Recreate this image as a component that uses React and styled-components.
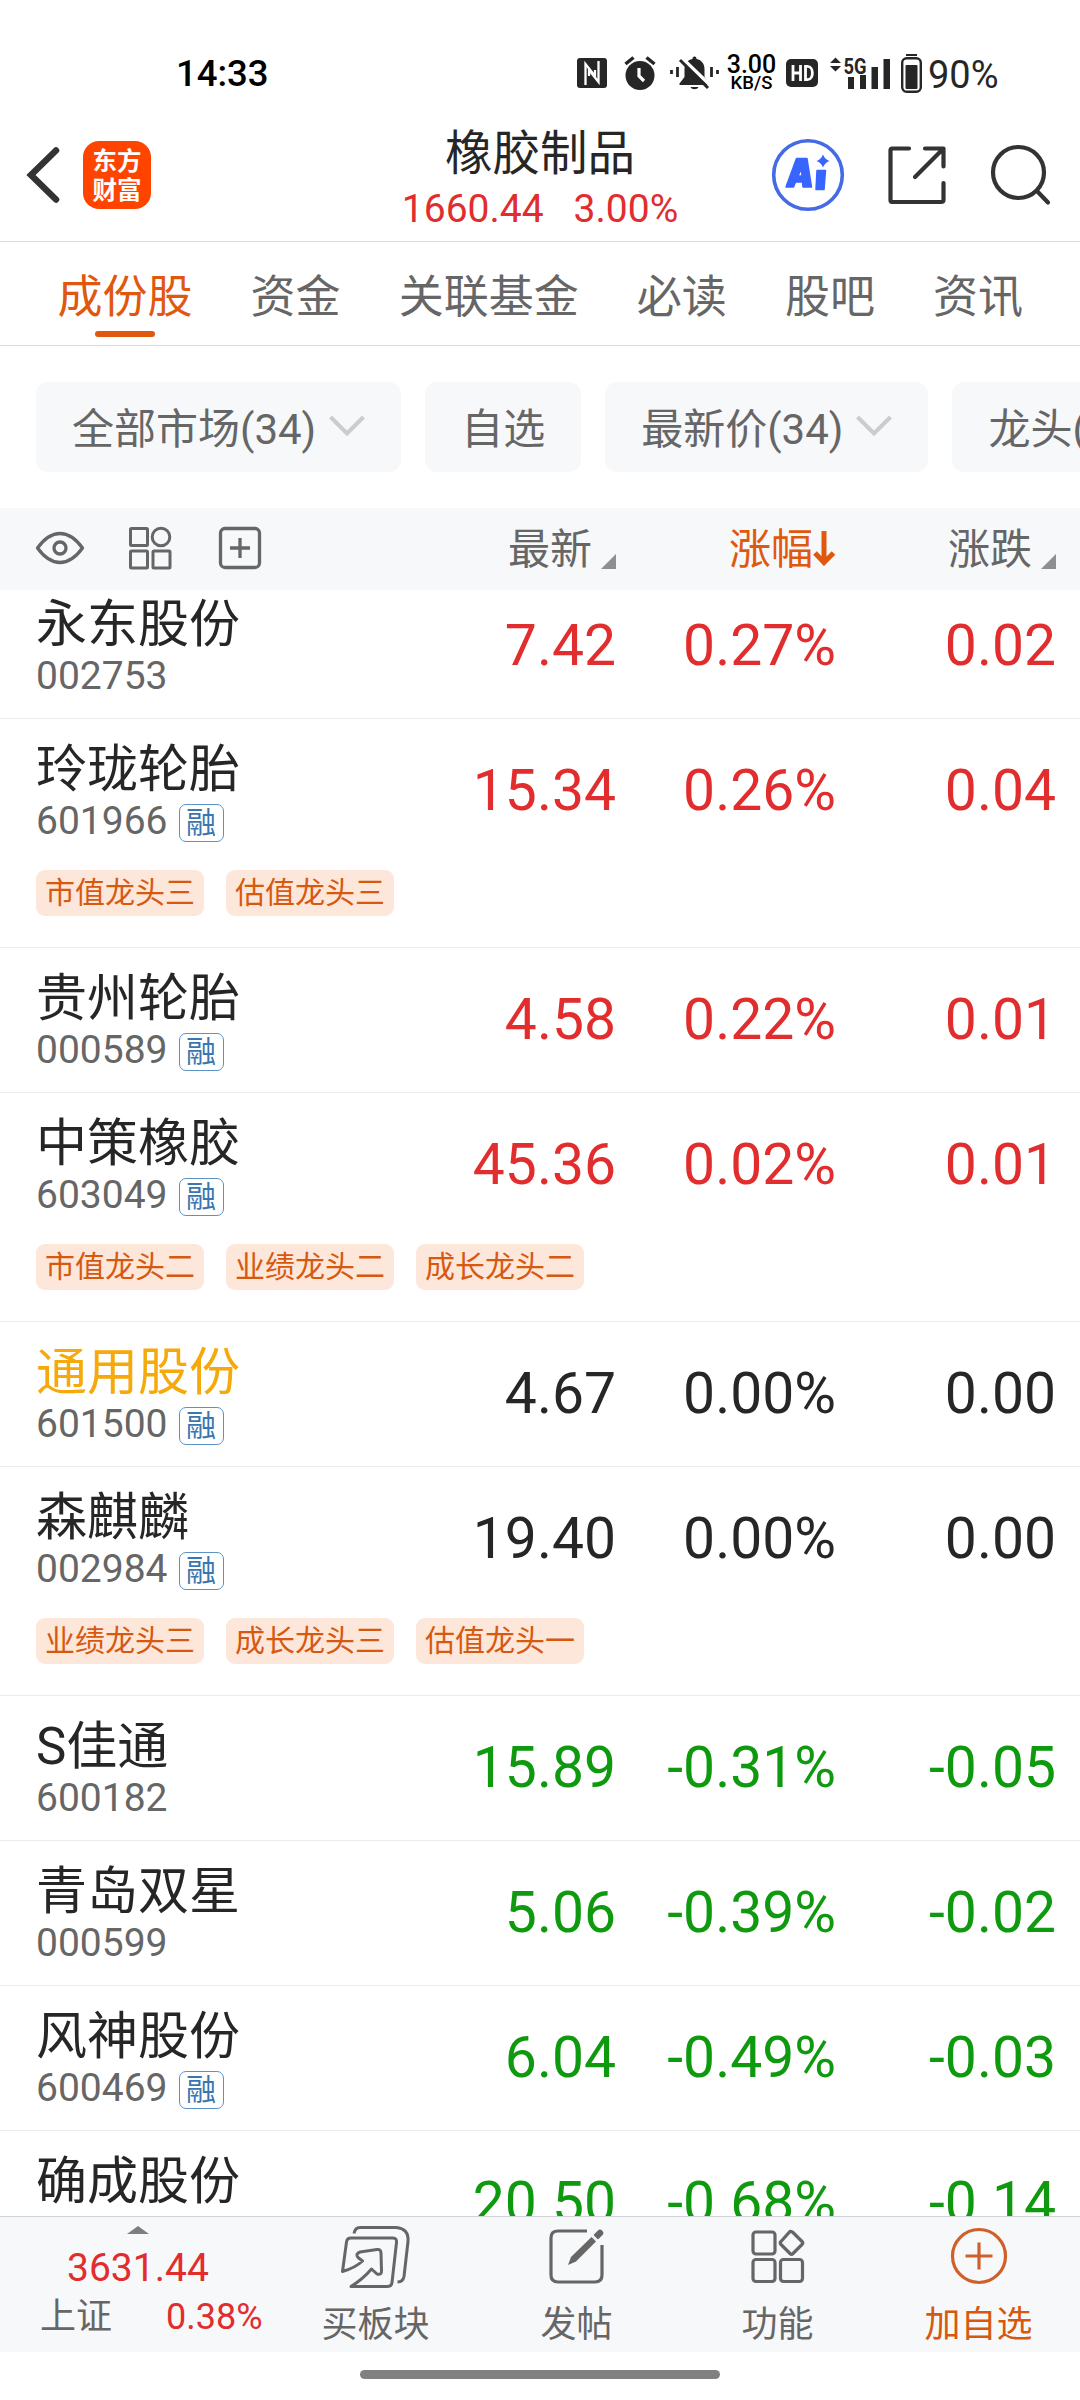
import React from "react";
import styled, { createGlobalStyle } from "styled-components";

const GlobalStyle = createGlobalStyle`
    * {
        box-sizing: border-box;
    }

    body {
        margin: 0;
        background: #fff;
        font-family: Roboto, "Noto Sans CJK SC", sans-serif;
        color: #262626;
    }
`;

const colors = {
    up: "#e12d2d",
    down: "#0f990f",
    flat: "#262626",
    accent: "#e0580e",
    grey: "#666",
    panel: "#f7f8fa",
};

const Screen = styled.div`
    display: flex;
    flex-direction: column;
    width: 1080px;
    height: 2400px;
    overflow: hidden;
    background: #fff;
`;

/* ---------- status bar ---------- */

const StatusBar = styled.div`
    display: flex;
    justify-content: space-between;
    height: 108px;
    padding: 38px 80px 0 176px;
    color: #000;
`;

const Clock = styled.div`
    height: 70px;
    line-height: 71px;
    font-size: 36.5px;
    font-weight: 500;
`;

const StatusIcons = styled.div`
    display: flex;
    align-items: center;
    height: 70px;
    color: #262626;
`;

const StatusIcon = styled.svg`
    flex: none;
    margin-right: ${(p) => p.$gap}px;
`;

const NetSpeed = styled.div`
    width: 51px;
    margin-right: 9px;
    text-align: center;
    font-weight: 500;
    color: #000;
`;

const SpeedValue = styled.div`
    font-size: 25px;
    line-height: 19px;
`;

const SpeedUnit = styled.div`
    font-size: 18.5px;
    line-height: 18px;
`;

const Percent = styled.div`
    width: 72px;
    font-size: 38px;
    line-height: 70px;
    padding-top: 3px;
`;

/* ---------- title bar ---------- */

const TitleBar = styled.div`
    display: grid;
    grid-template-columns: 360px 360px 360px;
    height: 134px;
    border-bottom: 1px solid #d9d9d9;
`;

const TitleLeft = styled.div`
    display: flex;
    align-items: center;
    padding-left: 26px;
`;

const TitleRight = styled.div`
    display: flex;
    align-items: center;
    padding-left: 51px;
`;

const Logo = styled.div`
    width: 68px;
    height: 68px;
    margin-left: 22px;
    padding-top: 6px;
    border-radius: 16px;
    background: #ff4400;
    color: #fff;
    font-size: 24.5px;
    font-weight: 700;
    line-height: 29px;
    text-align: center;
`;

const TitleCenter = styled.div`
    text-align: center;
    white-space: nowrap;
`;

const Title = styled.div`
    height: 68px;
    padding-top: 12px;
    font-size: 47.5px;
    line-height: 68px;
`;

const TitleQuote = styled.div`
    display: flex;
    justify-content: center;
    gap: 30px;
    padding-top: 10px;
    font-size: 39px;
    line-height: 46px;
    color: ${colors.up};
`;

const HeadIcon = styled.svg`
    flex: none;
    margin-right: ${(p) => p.$gap || 0}px;
`;

/* ---------- tabs and filters ---------- */

const Tabs = styled.div`
    display: flex;
    gap: 58.1px;
    height: 104px;
    padding-left: 57.5px;
    border-bottom: 1px solid #d9d9d9;
`;

const Tab = styled.div`
    display: flex;
    flex-direction: column;
    align-items: center;
    font-size: 45px;
    line-height: 89px;
    padding-top: 11px;
    height: 95px;
    white-space: nowrap;
    color: ${(p) => (p.$active ? colors.accent : colors.grey)};

    &::after {
        content: "";
        width: 60px;
        height: 6px;
        margin-top: -11px;
        border-radius: 3px;
        background: ${(p) => (p.$active ? colors.accent : "transparent")};
    }
`;

const Filters = styled.div`
    display: flex;
    gap: 24px;
    height: 162px;
    padding: 36px 0 0 36px;
    overflow: hidden;
`;

const Chip = styled.div`
    display: flex;
    flex: none;
    align-items: center;
    height: 90px;
    padding: 0 36px 3px;
    border-radius: 12px;
    background: ${colors.panel};
    color: ${colors.grey};
    font-size: 42px;
    white-space: nowrap;

    svg {
        margin-left: 13px;
    }
`;

/* ---------- table ---------- */

const HeadRow = styled.div`
    display: flex;
    align-items: center;
    flex: none;
    height: 82px;
    background: ${colors.panel};
    color: ${colors.grey};
    font-size: 42px;
`;

const HeadTools = styled.div`
    display: flex;
    align-items: center;
    width: 396px;
    padding: 0 0 2px 35px;
`;

const HeadCell = styled.div`
    display: flex;
    justify-content: flex-end;
    align-items: center;
    width: 220px;
    padding-bottom: 7px;
    color: ${(p) => (p.$active ? colors.accent : colors.grey)};
`;

const SortMark = styled.svg`
    margin: 31px 0 0 9px;
`;

const SortArrow = styled.svg`
    margin-top: 4px;
`;

const List = styled.div`
    flex: 1;
    min-height: 0;
    overflow: hidden;
`;

const Stock = styled.div`
    height: ${(p) => (p.$tall ? 229 : 145)}px;
    border-bottom: 1px solid #ebebeb;

    &:first-child {
        margin-top: -16px;
    }
`;

const StockMain = styled.div`
    display: flex;
    height: 143px;
`;

const StockInfo = styled.div`
    width: 396px;
    padding: 20px 0 0 36px;
`;

const StockName = styled.div`
    height: 59px;
    font-size: 51px;
    line-height: 62px;
    white-space: nowrap;
    color: ${(p) => (p.$own ? "#f5a90b" : colors.flat)};
`;

const StockCode = styled.div`
    display: flex;
    align-items: center;
    height: 46px;
    font-size: 39px;
    color: ${colors.grey};
`;

const Badge = styled.span`
    display: flex;
    align-items: center;
    justify-content: center;
    width: 45px;
    height: 38px;
    margin: 4px 0 0 11px;
    border: 1.5px solid #5b93c6;
    border-radius: 7px;
    color: #3a76b0;
    font-size: 30px;
    line-height: 34px;
`;

const Figure = styled.div`
    width: 220px;
    text-align: right;
    font-size: 57px;
    line-height: 143px;
    color: ${(p) => colors[p.$trend]};
`;

const Tags = styled.div`
    display: flex;
    gap: 22px;
    padding: 8px 0 0 36px;
`;

const Tag = styled.div`
    width: 168px;
    height: 46px;
    border-radius: 9px;
    background: #fde6da;
    color: #d6590f;
    font-size: 30px;
    line-height: 45px;
    text-align: center;
    white-space: nowrap;
`;

/* ---------- bottom ---------- */

const BottomBar = styled.div`
    display: flex;
    flex: none;
    height: 136px;
    border-top: 1px solid #cfd2d6;
    background: ${colors.panel};
`;

const IndexBox = styled.div`
    width: 275px;
    padding-top: 9px;
    color: ${colors.up};

    svg {
        display: block;
        margin-left: 127px;
    }
`;

const IndexValue = styled.div`
    padding: 11px 0 0 67px;
    font-size: 39px;
    line-height: 46px;
`;

const IndexLine = styled.div`
    display: flex;
    gap: 54px;
    padding-left: 40px;
    font-size: 36px;
    line-height: 52px;

    span {
        color: ${colors.grey};
    }
`;

const NavItem = styled.div`
    display: flex;
    flex-direction: column;
    align-items: center;
    width: 201px;
    padding-top: 8px;
    font-size: 36px;
    line-height: 52px;
    color: ${(p) => (p.$active ? "#d6590f" : colors.grey)};

    svg {
        margin-bottom: 10px;
    }
`;

const HomeArea = styled.div`
    display: flex;
    justify-content: center;
    flex: none;
    height: 48px;
    padding-top: 18px;
`;

const HomeBar = styled.div`
    width: 360px;
    height: 9px;
    border-radius: 5px;
    background: #808080;
`;

const tabs = ["成份股", "资金", "关联基金", "必读", "股吧", "资讯"];

const stocks = [
    { name: "永东股份", code: "002753", price: "7.42", pct: "0.27%", diff: "0.02", trend: "up" },
    { name: "玲珑轮胎", code: "601966", rong: true, price: "15.34", pct: "0.26%", diff: "0.04", trend: "up", tags: ["市值龙头三", "估值龙头三"] },
    { name: "贵州轮胎", code: "000589", rong: true, price: "4.58", pct: "0.22%", diff: "0.01", trend: "up" },
    { name: "中策橡胶", code: "603049", rong: true, price: "45.36", pct: "0.02%", diff: "0.01", trend: "up", tags: ["市值龙头二", "业绩龙头二", "成长龙头二"] },
    { name: "通用股份", code: "601500", rong: true, own: true, price: "4.67", pct: "0.00%", diff: "0.00", trend: "flat" },
    { name: "森麒麟", code: "002984", rong: true, price: "19.40", pct: "0.00%", diff: "0.00", trend: "flat", tags: ["业绩龙头三", "成长龙头三", "估值龙头一"] },
    { name: "S佳通", code: "600182", price: "15.89", pct: "-0.31%", diff: "-0.05", trend: "down" },
    { name: "青岛双星", code: "000599", price: "5.06", pct: "-0.39%", diff: "-0.02", trend: "down" },
    { name: "风神股份", code: "600469", rong: true, price: "6.04", pct: "-0.49%", diff: "-0.03", trend: "down" },
    { name: "确成股份", price: "20.50", pct: "-0.68%", diff: "-0.14", trend: "down" },
];

const ChipArrow = () => (
    <svg width="36" height="22" viewBox="0 0 36 22" fill="none" stroke="#ccc" strokeWidth="4">
        <path d="M1.500 2L18 18.500L34.500 2" />
    </svg>
);

const SortCorner = () => (
    <SortMark width="15" height="15" viewBox="0 0 15 15">
        <path d="M15 0V15H0Z" fill="#8e8e93" />
    </SortMark>
);

const StatusRow = () => (
    <StatusBar>
        <Clock>14:33</Clock>
        <StatusIcons>
            <StatusIcon $gap={17} width="30" height="30" viewBox="0 0 30 30">
                <rect width="30" height="30" rx="3" fill="currentColor" />
                <path d="M8.500 27V6L18 18V12M21.500 3V24L12 12V18" fill="none" stroke="#fff" strokeWidth="2.300" />
            </StatusIcon>
            <StatusIcon $gap={14} width="32" height="34" viewBox="0 0 32 34">
                <circle cx="16" cy="19.500" r="14.500" fill="currentColor" />
                <path d="M1.500 8L9.500 1.500M30.500 8L22.500 1.500" stroke="currentColor" strokeWidth="3.500" />
                <path d="M15 12V20L20 25" fill="none" stroke="#fff" strokeWidth="3.200" />
            </StatusIcon>
            <StatusIcon $gap={7} width="49" height="34" viewBox="0 0 49 34">
                <path d="M24.500 0.500C26 0.500 26.500 1.500 26.500 3C32 4 34.500 8.500 34.500 13V21L39.500 27.500V29H9.500V27.500L14.500 21V13C14.500 8.500 17 4 22.500 3C22.500 1.500 23 0.500 24.500 0.500ZM20.500 31H28.500C27.500 34 21.500 34 20.500 31Z" fill="currentColor" />
                <path d="M12.500 2.500L40 29" stroke="#fff" strokeWidth="3.500" />
                <path d="M10 4L38 32" stroke="currentColor" strokeWidth="3" />
                <path d="M7.500 11V21M41.500 11V21M1.500 14V18M47.500 14V18" stroke="currentColor" strokeWidth="2.800" />
            </StatusIcon>
            <NetSpeed>
                <SpeedValue>3.00</SpeedValue>
                <SpeedUnit>KB/S</SpeedUnit>
            </NetSpeed>
            <StatusIcon $gap={12} width="32" height="28" viewBox="0 0 32 28">
                <rect width="32" height="28" rx="5" fill="currentColor" />
                <path d="M7 6V22M14.500 6V22M7 14H14.500M19.500 7.300V20.700H21.500C28 20.700 28 7.300 21.500 7.300Z" fill="none" stroke="#fff" strokeWidth="2.800" />
            </StatusIcon>
            <StatusIcon $gap={11} width="60" height="34" viewBox="0 0 60 34">
                <path d="M0 7L5.500 1.500L11 7ZM0 10L5.500 15.500L11 10Z" fill="currentColor" />
                <text x="13.500" y="17.500" fontFamily="Roboto" fontWeight="700" fontSize="22" textLength="23" lengthAdjust="spacingAndGlyphs" fill="currentColor">5G</text>
                <path d="M18 21H24V33H18ZM30 19H36V33H30ZM41.500 11H48V33H41.500ZM53.500 3H60V33H53.500Z" fill="currentColor" />
            </StatusIcon>
            <StatusIcon $gap={6} width="21" height="39" viewBox="0 0 21 39">
                <path d="M5 1H16" stroke="currentColor" strokeWidth="2" />
                <rect x="1.200" y="4.200" width="18.600" height="33.600" rx="4.500" fill="none" stroke="currentColor" strokeWidth="2.400" />
                <rect x="4.500" y="11" width="12" height="24" rx="1" fill="currentColor" />
            </StatusIcon>
            <Percent>90%</Percent>
        </StatusIcons>
    </StatusBar>
);

const Header = () => (
    <TitleBar>
        <TitleLeft>
            <HeadIcon width="35" height="58" viewBox="0 0 35 58" fill="none" stroke="#333" strokeWidth="6.500" strokeLinecap="round">
                <path d="M30 4.500L5 29L30 53.500" />
            </HeadIcon>
            <Logo>
                东方
                <br />
                财富
            </Logo>
        </TitleLeft>
        <TitleCenter>
            <Title>橡胶制品</Title>
            <TitleQuote>
                <span>1660.44</span>
                <span>3.00%</span>
            </TitleQuote>
        </TitleCenter>
        <TitleRight>
            <HeadIcon $gap={42} width="74" height="74" viewBox="0 0 74 74">
                <circle cx="37" cy="37" r="34.300" fill="none" stroke="#456ae6" strokeWidth="3.600" />
                <path fillRule="evenodd" d="M15 49L25.500 20.500H36L40.500 49H32L31.500 44H24.500L22.500 49ZM27 38H31L30.500 30Z" fill="#3865ff" stroke="#3865ff" strokeWidth="1.500" strokeLinejoin="round" />
                <path d="M46 32.500H54.500L53 51.500H45Z" fill="#3865ff" stroke="#3865ff" strokeWidth="1.500" strokeLinejoin="round" />
                <path d="M52 16.500Q53.800 21.200 58.500 23Q53.800 24.800 52 29.500Q50.200 24.800 45.500 23Q50.200 21.200 52 16.500Z" fill="#3865ff" />
            </HeadIcon>
            <HeadIcon $gap={43} width="60" height="60" viewBox="0 0 60 60" fill="none" stroke="#333" strokeWidth="4.200" strokeLinecap="round" strokeLinejoin="round">
                <path d="M22 3.500H5Q3.500 3.500 3.500 5V55Q3.500 57 5 57H54Q56.500 57 56.500 55V38M38 3.500H56.500V21.500M56 4L28 32" />
            </HeadIcon>
            <HeadIcon width="62" height="62" viewBox="0 0 62 62" fill="none" stroke="#333" strokeWidth="4.200" strokeLinecap="round">
                <circle cx="28.500" cy="28.500" r="25.500" />
                <path d="M47 47L58 58.500" />
            </HeadIcon>
        </TitleRight>
    </TitleBar>
);

const TableHead = () => (
    <HeadRow>
        <HeadTools>
            <HeadIcon $gap={43} width="50" height="34" viewBox="0 0 50 34" fill="none" stroke="#666" strokeWidth="3.300">
                <path d="M2.500 17Q13 2.500 25 2.500T47.500 17Q37 31.500 25 31.500T2.500 17Z" strokeLinejoin="round" />
                <circle cx="25" cy="17" r="6" />
            </HeadIcon>
            <HeadIcon $gap={46} width="44" height="44" viewBox="0 0 44 44" fill="none" stroke="#666" strokeWidth="3">
                <rect x="2.500" y="2.500" width="17" height="17" rx="1" />
                <circle cx="33" cy="11" r="8.800" />
                <rect x="2.500" y="25" width="17" height="17" rx="1" />
                <rect x="25" y="25" width="17" height="17" rx="1" />
            </HeadIcon>
            <HeadIcon width="44" height="44" viewBox="0 0 44 44" fill="none" stroke="#666" strokeWidth="3.300">
                <rect x="2.500" y="2.500" width="39" height="39" rx="4.500" />
                <path d="M22 12V32M12 22H32" />
            </HeadIcon>
        </HeadTools>
        <HeadCell>
            最新
            <SortCorner />
        </HeadCell>
        <HeadCell $active>
            涨幅
            <SortArrow width="23" height="36" viewBox="0 0 23 36" fill="none" stroke={colors.accent} strokeWidth="5">
                <path d="M11 1V33M2 23L11 32.500L20.500 23" />
            </SortArrow>
        </HeadCell>
        <HeadCell>
            涨跌
            <SortCorner />
        </HeadCell>
    </HeadRow>
);

const StockRow = ({ stock }) => (
    <Stock $tall={!!stock.tags}>
        <StockMain>
            <StockInfo>
                <StockName $own={stock.own}>{stock.name}</StockName>
                {stock.code && (
                    <StockCode>
                        {stock.code}
                        {stock.rong && <Badge>融</Badge>}
                    </StockCode>
                )}
            </StockInfo>
            <Figure $trend={stock.trend}>{stock.price}</Figure>
            <Figure $trend={stock.trend}>{stock.pct}</Figure>
            <Figure $trend={stock.trend}>{stock.diff}</Figure>
        </StockMain>
        {stock.tags && (
            <Tags>
                {stock.tags.map((tag) => (
                    <Tag key={tag}>{tag}</Tag>
                ))}
            </Tags>
        )}
    </Stock>
);

const Footer = () => (
    <BottomBar>
        <IndexBox>
            <svg width="22" height="8" viewBox="0 0 22 8">
                <path d="M0 8L11 0L22 8Z" fill="#7d7d82" />
            </svg>
            <IndexValue>3631.44</IndexValue>
            <IndexLine>
                <span>上证</span>0.38%
            </IndexLine>
        </IndexBox>
        <NavItem>
            <svg width="72" height="64" viewBox="0 0 72 64" fill="none" stroke="#666" strokeWidth="3" strokeLinejoin="round">
                <path d="M14 8.500Q15 2.500 20 2.500H56Q69 3.500 68 16.500L64 51.500Q63 57 57.500 57" />
                <path d="M2.500 46.500L6.500 17Q7 13 11 13H53Q57 13 56.500 17.500L52 57.500Q51.500 61.500 47.500 61.500H11Q23 54 31.500 44L37 49Q42 50 41.500 46L41 28Q41 24 37 24.500L20 27Q15 29 18 32.500L22.500 36Q15 43 2.500 46.500Z" />
            </svg>
            买板块
        </NavItem>
        <NavItem>
            <svg width="58" height="64" viewBox="0 0 58 64" fill="none" stroke="#666" strokeWidth="3.200">
                <path d="M39 6H10Q3 6 3 13V50Q3 57 10 57H47Q54 57 54 50V20" />
                <path d="M20 40L23 32L43.500 12L48 16.500L28 36.500Z" fill="#666" stroke="none" />
                <path d="M48.500 11.500L52 8" strokeWidth="6.500" strokeLinecap="round" />
                <path d="M43.500 9.500L50.500 16.500" stroke={colors.panel} strokeWidth="2" />
            </svg>
            发帖
        </NavItem>
        <NavItem>
            <svg width="56" height="64" viewBox="0 0 56 64" fill="none" stroke="#666" strokeWidth="3.200">
                <rect x="3" y="7" width="22" height="22" rx="3" />
                <path d="M40 6.500Q41.500 6 43 7.500L52 16.500Q53.500 18 52 19.500L43 28.500Q41.500 30 40 28.500L31 19.500Q29.500 18 31 16.500Z" />
                <rect x="3" y="34.500" width="22" height="22" rx="3" />
                <rect x="30.500" y="34.500" width="22" height="22" rx="3" />
            </svg>
            功能
        </NavItem>
        <NavItem $active>
            <svg width="58" height="64" viewBox="0 0 58 64" fill="none" stroke="#d0602a" strokeWidth="3.200">
                <circle cx="29" cy="31" r="26.500" />
                <path d="M29 17.500V44.500M15.500 31H42.500" />
            </svg>
            加自选
        </NavItem>
    </BottomBar>
);

const App = () => {
    return (
        <Screen>
            <GlobalStyle />
            <StatusRow />
            <Header />
            <Tabs>
                {tabs.map((tab, i) => (
                    <Tab key={tab} $active={i === 0}>
                        {tab}
                    </Tab>
                ))}
            </Tabs>
            <Filters>
                <Chip>
                    全部市场(34)
                    <ChipArrow />
                </Chip>
                <Chip>自选</Chip>
                <Chip>
                    最新价(34)
                    <ChipArrow />
                </Chip>
                <Chip>龙头(34)</Chip>
            </Filters>
            <TableHead />
            <List>
                {stocks.map((stock) => (
                    <StockRow key={stock.name} stock={stock} />
                ))}
            </List>
            <Footer />
            <HomeArea>
                <HomeBar />
            </HomeArea>
        </Screen>
    );
};

export default App;
